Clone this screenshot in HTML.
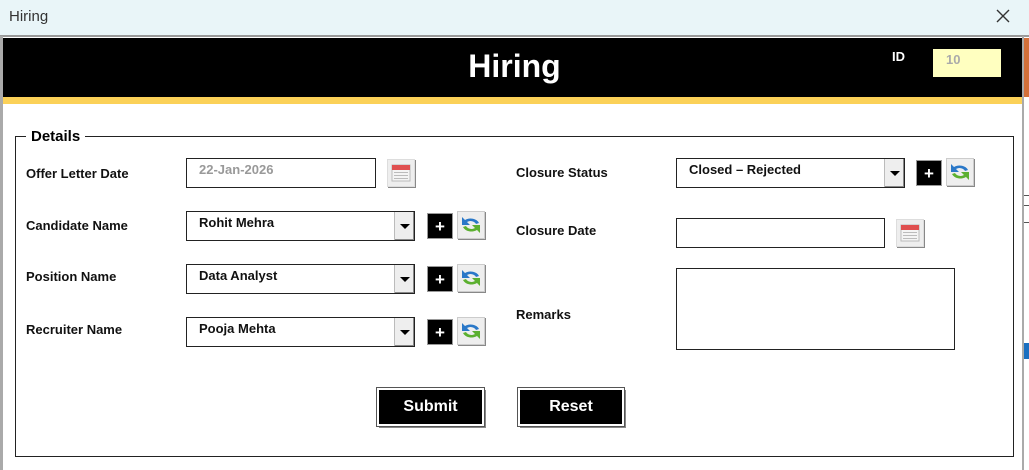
<!DOCTYPE html><html><head><style>
*{margin:0;padding:0;box-sizing:border-box}
body{width:1029px;height:470px;position:relative;overflow:hidden;background:#fff;font-family:"Liberation Sans",Arial,sans-serif}
.a{position:absolute}
.lbl{position:absolute;font-size:13px;font-weight:bold;color:#111}
.in{position:absolute;border:1px solid #222;background:#fff;height:30px;font-size:13px;font-weight:bold;padding:3px 12px;color:#111}
.dd{position:absolute;right:0;top:0;width:20px;height:28px;background:#eee;border-left:1px solid #bbb;box-shadow:inset -1px -1px #888}
.dd:after{content:"";position:absolute;left:5px;top:12px;border-left:5px solid transparent;border-right:5px solid transparent;border-top:5px solid #000}
.plus{position:absolute;width:26px;height:26px;background:#000;color:#fff;font-weight:bold;font-size:17px;text-align:center;line-height:26px;border:1px solid #999}
.ref{position:absolute;width:28px;height:28px;background:#eee;border:1px solid #ccc;box-shadow:1px 1px #888}
.cal{position:absolute;width:28px;height:28px;background:#eee;border:1px solid #ddd;box-shadow:1px 1px #888}
.btn{position:absolute;height:38px;background:#000;color:#fff;font-weight:bold;font-size:16px;text-align:center;line-height:34px;border:2px solid #fff;outline:1px solid #555;box-shadow:2px 2px #888}
</style></head><body>
<div class="a" style="left:0;top:0;width:1029px;height:36px;background:#e9f5f8"></div>
<div class="a" style="left:9px;top:8px;font-size:15px;color:#333">Hiring</div>
<svg class="a" style="left:995px;top:8px" width="16" height="16"><path d="M2 2L14 14M14 2L2 14" stroke="#333" stroke-width="1.4"/></svg>
<div class="a" style="left:0;top:35px;width:1029px;height:2px;background:#999"></div>
<div class="a" style="left:0;top:36px;width:3px;height:434px;background:#aaa"></div>
<div class="a" style="left:1022px;top:36px;width:2px;height:434px;background:#aaa"></div>
<div class="a" style="left:1024px;top:38px;width:5px;height:59px;background:#d3703a"></div>
<div class="a" style="left:1024px;top:195px;width:5px;height:1px;background:#555"></div>
<div class="a" style="left:1024px;top:205px;width:5px;height:1px;background:#555"></div>
<div class="a" style="left:1024px;top:222px;width:5px;height:1px;background:#555"></div>
<div class="a" style="left:1024px;top:343px;width:5px;height:16px;background:#1a6fc0"></div>
<div class="a" style="left:3px;top:38px;width:1019px;height:59px;background:#000"></div>
<div class="a" style="left:3px;top:97px;width:1019px;height:7px;background:#fbd158"></div>
<div class="a" style="left:0;top:48px;width:1029px;text-align:center;font-size:32px;font-weight:bold;color:#fff">Hiring</div>
<div class="a" style="left:892px;top:49px;font-size:13px;font-weight:bold;color:#fff">ID</div>
<div class="a" style="left:933px;top:49px;width:68px;height:28px;background:#ffffc0;color:#aaa;font-size:13px;font-weight:bold;padding:3px 13px">10</div>
<div class="a" style="left:15px;top:136px;width:999px;height:321px;border:1px solid #222"></div>
<div class="a" style="left:26px;top:128px;padding:0 5px;background:#fff;font-size:15px;font-weight:bold">Details</div>

<div class="lbl" style="left:26px;top:166px">Offer Letter Date</div>
<div class="in" style="left:186px;top:158px;width:190px;color:#999">22-Jan-2026</div>
<div class="cal" style="left:387px;top:159px"><svg width="26" height="26"><rect x="4" y="5" width="18" height="16" fill="#f4f4f4" stroke="#bbb"/><rect x="4" y="5" width="18" height="5" fill="#e05050"/><g fill="#bbb"><rect x="6" y="12" width="14" height="1"/><rect x="6" y="15" width="14" height="1"/><rect x="6" y="18" width="14" height="1"/></g></svg></div>

<div class="lbl" style="left:26px;top:218px">Candidate Name</div>
<div class="in" style="left:186px;top:211px;width:229px">Rohit Mehra<div class="dd"></div></div>
<div class="plus" style="left:427px;top:213px">+</div>
<div class="ref" style="left:457px;top:211px"><svg width="26" height="26"><path d="M21 11 A9 7 0 0 0 7 8 L4 5 L4 13 L12 13 L9 10 A6 5 0 0 1 18 12Z" fill="#2a78c8"/><path d="M5 15 A9 7 0 0 0 19 18 L22 21 L22 13 L14 13 L17 16 A6 5 0 0 1 8 14Z" fill="#5cb030"/></svg></div>

<div class="lbl" style="left:26px;top:269px">Position Name</div>
<div class="in" style="left:186px;top:264px;width:229px">Data Analyst<div class="dd"></div></div>
<div class="plus" style="left:427px;top:266px">+</div>
<div class="ref" style="left:457px;top:264px"><svg width="26" height="26"><path d="M21 11 A9 7 0 0 0 7 8 L4 5 L4 13 L12 13 L9 10 A6 5 0 0 1 18 12Z" fill="#2a78c8"/><path d="M5 15 A9 7 0 0 0 19 18 L22 21 L22 13 L14 13 L17 16 A6 5 0 0 1 8 14Z" fill="#5cb030"/></svg></div>

<div class="lbl" style="left:26px;top:322px">Recruiter Name</div>
<div class="in" style="left:186px;top:317px;width:229px">Pooja Mehta<div class="dd"></div></div>
<div class="plus" style="left:427px;top:319px">+</div>
<div class="ref" style="left:457px;top:317px"><svg width="26" height="26"><path d="M21 11 A9 7 0 0 0 7 8 L4 5 L4 13 L12 13 L9 10 A6 5 0 0 1 18 12Z" fill="#2a78c8"/><path d="M5 15 A9 7 0 0 0 19 18 L22 21 L22 13 L14 13 L17 16 A6 5 0 0 1 8 14Z" fill="#5cb030"/></svg></div>

<div class="lbl" style="left:516px;top:165px">Closure Status</div>
<div class="in" style="left:676px;top:158px;width:229px">Closed – Rejected<div class="dd"></div></div>
<div class="plus" style="left:916px;top:160px">+</div>
<div class="ref" style="left:946px;top:158px"><svg width="26" height="26"><path d="M21 11 A9 7 0 0 0 7 8 L4 5 L4 13 L12 13 L9 10 A6 5 0 0 1 18 12Z" fill="#2a78c8"/><path d="M5 15 A9 7 0 0 0 19 18 L22 21 L22 13 L14 13 L17 16 A6 5 0 0 1 8 14Z" fill="#5cb030"/></svg></div>

<div class="lbl" style="left:516px;top:223px">Closure Date</div>
<div class="in" style="left:676px;top:218px;width:209px"></div>
<div class="cal" style="left:896px;top:219px"><svg width="26" height="26"><rect x="4" y="5" width="18" height="16" fill="#f4f4f4" stroke="#bbb"/><rect x="4" y="5" width="18" height="5" fill="#e05050"/><g fill="#bbb"><rect x="6" y="12" width="14" height="1"/><rect x="6" y="15" width="14" height="1"/><rect x="6" y="18" width="14" height="1"/></g></svg></div>

<div class="lbl" style="left:516px;top:307px">Remarks</div>
<div class="in" style="left:676px;top:268px;width:279px;height:82px"></div>

<div class="btn" style="left:377px;top:388px;width:107px">Submit</div>
<div class="btn" style="left:518px;top:388px;width:106px">Reset</div>
</body></html>
